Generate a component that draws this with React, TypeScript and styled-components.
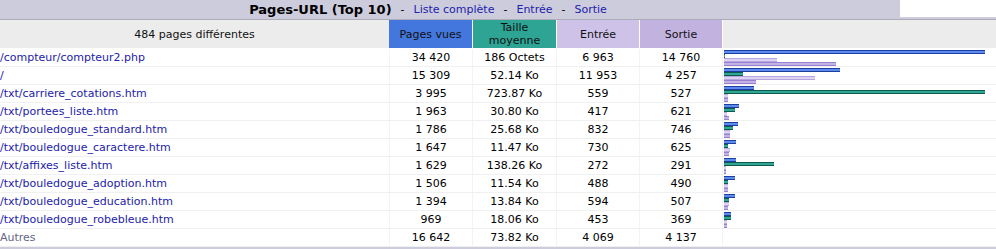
import React from "react";
import styled, { createGlobalStyle } from "styled-components";

const Global = createGlobalStyle`
  html, body { margin: 0; padding: 0; background: #ffffff; }
  body { font-family: "DejaVu Sans", Verdana, sans-serif; font-size: 11px; color: #000; }
`;

const FONT = `"DejaVu Sans", Verdana, sans-serif`;

const TitleRow = styled.div`
  display: flex;
  height: 19px;
`;

const TitleCell = styled.div`
  width: 900px;
  box-sizing: border-box;
  padding-right: 44px;
  background: #ccccdd;
  display: flex;
  align-items: center;
  justify-content: center;
  gap: 6px;
  font-family: ${FONT};
  font-size: 11px;
`;

const TitleText = styled.span`
  font-weight: bold;
  font-size: 13px;
  color: #000;
`;

const Sep = styled.span`
  color: #000;
  padding: 0 3px;
`;

const TitleLink = styled.a`
  color: #2222aa;
  text-decoration: none;
  font-size: 11px;
`;

const BlankCell = styled.div`
  flex: 1;
  background: #ffffff;
  border-bottom: 2px solid #ccccdd;
  box-sizing: border-box;
`;

const TableBox = styled.div`
  border-top: 1px solid #acacb8;
  border-bottom: 2px solid #ccccdd;
  background: #ffffff;
`;

const Grid = styled.div<{ $head?: boolean }>`
  display: grid;
  grid-template-columns: 389px 83px 84px 83px 83px 1fr;
  height: ${(p) => (p.$head ? "29px" : "18px")};
  box-sizing: border-box;
  border-bottom: 1px solid ${(p) => (p.$head ? "#ffffff" : "#f0f0f0")};
`;

const HeadCell = styled.div<{ $bg: string; $sep?: boolean }>`
  background: ${(p) => p.$bg};
  border-left: ${(p) => (p.$sep ? "1px solid #ffffff" : "none")};
  display: flex;
  align-items: center;
  justify-content: center;
  text-align: center;
  line-height: 13px;
  font-size: 11px;
  color: #111;
`;

const Cell = styled.div<{ $align?: string; $line?: boolean }>`
  display: flex;
  align-items: center;
  justify-content: ${(p) => p.$align || "center"};
  border-left: ${(p) => (p.$line ? "1px solid #f3f3f3" : "none")};
  white-space: nowrap;
  overflow: hidden;
  font-size: 11px;
  color: #000;
`;

const UrlLink = styled.a`
  color: #2222aa;
  text-decoration: none;
`;

const Others = styled.span`
  color: #666688;
`;

const BarCell = styled.div`
  border-left: 1px solid #f3f3f3;
  padding: 1px 0 0 1px;
  display: flex;
  flex-direction: column;
`;

const Bar = styled.div<{ $dark: string; $light: string }>`
  height: 4px;
  background: linear-gradient(
    to bottom,
    ${(p) => p.$dark} 0,
    ${(p) => p.$dark} 1px,
    ${(p) => p.$light} 1px,
    ${(p) => p.$light} 3px,
    ${(p) => p.$dark} 3px
  );
`;

type Row = {
  url: string;
  pages: number;
  size: string;
  bytes: number;
  entry: number;
  exit: number;
};

const rows: Row[] = [
  { url: "/compteur/compteur2.php", pages: 34420, size: "186 Octets", bytes: 0.18, entry: 6963, exit: 14760 },
  { url: "/", pages: 15309, size: "52.14 Ko", bytes: 52.14, entry: 11953, exit: 4257 },
  { url: "/txt/carriere_cotations.htm", pages: 3995, size: "723.87 Ko", bytes: 723.87, entry: 559, exit: 527 },
  { url: "/txt/portees_liste.htm", pages: 1963, size: "30.80 Ko", bytes: 30.8, entry: 417, exit: 621 },
  { url: "/txt/bouledogue_standard.htm", pages: 1786, size: "25.68 Ko", bytes: 25.68, entry: 832, exit: 746 },
  { url: "/txt/bouledogue_caractere.htm", pages: 1647, size: "11.47 Ko", bytes: 11.47, entry: 730, exit: 625 },
  { url: "/txt/affixes_liste.htm", pages: 1629, size: "138.26 Ko", bytes: 138.26, entry: 272, exit: 291 },
  { url: "/txt/bouledogue_adoption.htm", pages: 1506, size: "11.54 Ko", bytes: 11.54, entry: 488, exit: 490 },
  { url: "/txt/bouledogue_education.htm", pages: 1394, size: "13.84 Ko", bytes: 13.84, entry: 594, exit: 507 },
  { url: "/txt/bouledogue_robebleue.htm", pages: 969, size: "18.06 Ko", bytes: 18.06, entry: 453, exit: 369 },
];

const fmt = (n: number) => n.toString().replace(/\B(?=(\d{3})+(?!\d))/g, " ");

const MAXW = 261;
const maxPages = 34420;
const maxBytes = 723.87;
const w = (v: number, max: number) => Math.max(1, Math.round((v / max) * MAXW));

export default function App() {
  return (
    <>
      <Global />
      <TitleRow>
        <TitleCell>
          <TitleText>Pages-URL (Top 10)</TitleText>
          <Sep>-</Sep>
          <TitleLink href="#">Liste complète</TitleLink>
          <Sep>-</Sep>
          <TitleLink href="#">Entrée</TitleLink>
          <Sep>-</Sep>
          <TitleLink href="#">Sortie</TitleLink>
        </TitleCell>
        <BlankCell />
      </TitleRow>
      <TableBox>
        <Grid $head>
          <HeadCell $bg="#ececec">484 pages différentes</HeadCell>
          <HeadCell $bg="#4477dd">Pages vues</HeadCell>
          <HeadCell $bg="#2ea495" $sep>
            Taille
            <br />
            moyenne
          </HeadCell>
          <HeadCell $bg="#cec2e8" $sep>Entrée</HeadCell>
          <HeadCell $bg="#c1b2e0" $sep>Sortie</HeadCell>
          <HeadCell $bg="#ececec" $sep />
        </Grid>
        {rows.map((r) => (
          <Grid key={r.url}>
            <Cell $align="flex-start">
              <UrlLink href="#">{r.url}</UrlLink>
            </Cell>
            <Cell $line>{fmt(r.pages)}</Cell>
            <Cell $line>{r.size}</Cell>
            <Cell $line>{fmt(r.entry)}</Cell>
            <Cell $line>{fmt(r.exit)}</Cell>
            <BarCell>
              <Bar $dark="#1f3f9f" $light="#5b8bee" style={{ width: w(r.pages, maxPages) }} />
              <Bar $dark="#0f5a4c" $light="#2fa796" style={{ width: w(r.bytes, maxBytes) }} />
              <Bar $dark="#b8a6e0" $light="#dcd2f2" style={{ width: w(r.entry, maxPages) }} />
              <Bar $dark="#9a80d0" $light="#c3b2e6" style={{ width: w(r.exit, maxPages) }} />
            </BarCell>
          </Grid>
        ))}
        <Grid>
          <Cell $align="flex-start">
            <Others>Autres</Others>
          </Cell>
          <Cell $line>16 642</Cell>
          <Cell $line>73.82 Ko</Cell>
          <Cell $line>4 069</Cell>
          <Cell $line>4 137</Cell>
          <BarCell />
        </Grid>
      </TableBox>
    </>
  );
}
